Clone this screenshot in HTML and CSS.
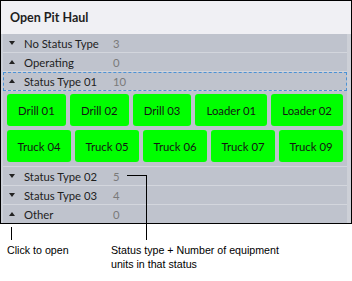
FILE: index.html
```html
<!DOCTYPE html>
<html lang="en">
<head>
<meta charset="UTF-8">
<meta name="viewport" content="width=device-width, initial-scale=1.0">
<title>Open Pit Haul</title>
<link rel="stylesheet" href="styles.css">
</head>
<body>

<!-- status panel -->
<div class="panel">
  <div class="panel-header">Open Pit Haul</div>
  <div class="panel-body">
    <div class="group-list">
      <div class="group-row"><span class="arrow down"></span><span class="group-name">No Status Type</span><span class="group-count">3</span></div>
      <div class="group-row"><span class="arrow up"></span><span class="group-name">Operating</span><span class="group-count">0</span></div>
      <div class="group-row focused"><span class="arrow up"></span><span class="group-name">Status Type 01</span><span class="group-count">10</span></div>
      <!-- units in the open group -->
      <div class="unit-grid">
        <button class="unit">Drill 01</button>
        <button class="unit">Drill 02</button>
        <button class="unit">Drill 03</button>
        <button class="unit">Loader 01</button>
        <button class="unit">Loader 02</button>
        <button class="unit">Truck 04</button>
        <button class="unit">Truck 05</button>
        <button class="unit">Truck 06</button>
        <button class="unit">Truck 07</button>
        <button class="unit">Truck 09</button>
      </div>
      <div class="group-row"><span class="arrow down"></span><span class="group-name">Status Type 02</span><span class="group-count">5</span></div>
      <div class="group-row"><span class="arrow down"></span><span class="group-name">Status Type 03</span><span class="group-count">4</span></div>
      <div class="group-row last"><span class="arrow up"></span><span class="group-name">Other</span><span class="group-count">0</span></div>
    </div>
    <div class="scroll-track"></div>
  </div>
</div>

<!-- callouts -->
<div class="notes">
  <div class="note note-open">Click to open</div>
  <div class="note note-status">Status type + Number of equipment<br>units in that status</div>
</div>
<span class="leader leader-open"></span>
<span class="leader leader-count-h"></span>
<span class="leader leader-count-v"></span>

</body>
</html>
```

FILE: styles.css
```css
body {
  margin: 0;
  background: #fff;
  position: relative;
  font-family: Lato, "Noto Sans", sans-serif;
}

/* panel */
.panel {
  width: 352px;
  box-sizing: border-box;
  border: 1px solid #000;
}

.panel-header {
  height: 33px;
  line-height: 33px;
  padding-left: 9px;
  background-color: #f0f0f4;
  font-size: 12.5px;
  font-weight: 700;
  color: #1e1e1e;
}

.panel-body {
  display: flex;
  padding-left: 2px;
  background-color: #ccd0d8;
}

.group-list {
  flex: 1;
  background-color: #bfc3cd;
}

.scroll-track {
  width: 4px;
  background-color: #cdd0d7;
}

/* group rows */
.group-row {
  display: flex;
  align-items: center;
  height: 18px;
  border-bottom: 1px solid #d3d6dd;
  font-size: 11.3px;
  color: #1e1e1e;
}

.group-row.last {
  border-bottom: none;
}

.group-row.focused {
  outline: 1px dashed #4a92d6;
  outline-offset: -1px;
}

.arrow {
  width: 21px;
  display: flex;
  justify-content: center;
  padding-right: 3px;
  box-sizing: border-box;
}

.arrow::before {
  content: "";
  border-left: 3px solid transparent;
  border-right: 3px solid transparent;
}

.arrow.down::before {
  border-top: 4px solid #222;
}

.arrow.up::before {
  border-bottom: 4px solid #222;
}

.group-name {
  width: 89px;
}

.group-count {
  color: #7a7a7a;
}

/* unit buttons */
.unit-grid {
  display: flex;
  flex-wrap: wrap;
  gap: 4px;
  padding: 3px 4px 4px 4px;
  border-bottom: 1px solid #d3d6dd;
}

.unit {
  flex: 1 1 auto;
  height: 32px;
  padding: 0 9px;
  border: none;
  border-radius: 3px;
  background-color: #00ff00;
  font-family: inherit;
  font-size: 11.3px;
  color: #141414;
}

/* callouts */
.notes {
  display: flex;
  padding-top: 19px;
  font-family: "Liberation Sans", Arial, sans-serif;
  font-size: 10.67px;
  line-height: 14px;
  color: #000;
}

.note-open {
  width: 104px;
  padding-left: 7px;
}

.leader {
  position: absolute;
  background-color: #000;
}

.leader-open {
  left: 11px;
  top: 227px;
  width: 1px;
  height: 13px;
}

.leader-count-h {
  left: 127px;
  top: 175px;
  width: 20px;
  height: 1px;
}

.leader-count-v {
  left: 146px;
  top: 175px;
  width: 1px;
  height: 65px;
}
```
